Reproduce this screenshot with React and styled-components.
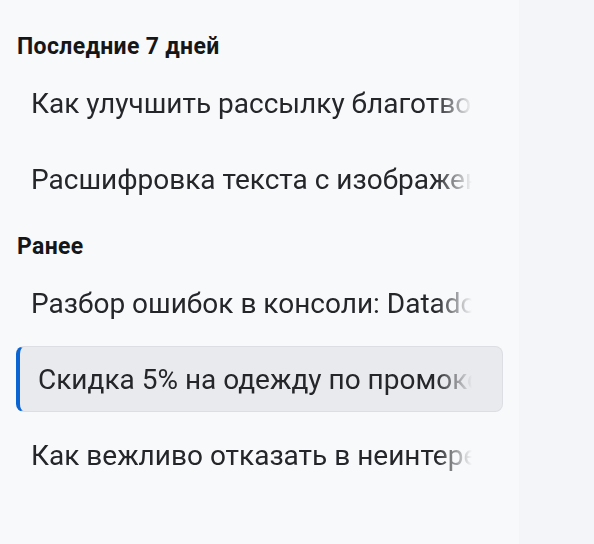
import React from 'react';
import styled, { createGlobalStyle } from 'styled-components';

const GlobalStyle = createGlobalStyle`
  html, body {
    margin: 0;
    padding: 0;
    height: 100%;
    background: #f4f5f8;
  }
  #root {
    height: 100%;
  }
`;

const sections = [
  {
    title: 'Последние 7 дней',
    items: [
      { id: 1, text: 'Как улучшить рассылку благотворительного фонда' },
      { id: 2, text: 'Расшифровка текста с изображения' },
    ],
  },
  {
    title: 'Ранее',
    items: [
      { id: 3, text: 'Разбор ошибок в консоли: Datadog' },
      { id: 4, text: 'Скидка 5% на одежду по промокоду', active: true },
      { id: 5, text: 'Как вежливо отказать в неинтересном предложении' },
    ],
  },
];

const Page = styled.div`
  display: flex;
  height: 544px;
  font-family: Roboto, "Noto Sans", sans-serif;
`;

const Sidebar = styled.nav`
  width: 519px;
  box-sizing: border-box;
  padding: 33px 16px 0 16px;
  background: #f8f9fb;
  display: flex;
  flex-direction: column;
`;

const Main = styled.main`
  flex: 1;
  background: #f4f5f8;
`;

const Section = styled.section`
  display: flex;
  flex-direction: column;
  & + & {
    margin-top: 21px;
  }
`;

const SectionTitle = styled.h3`
  margin: 0 0 9px 1px;
  font-size: 23px;
  letter-spacing: 0.35px;
  line-height: 28px;
  font-weight: 700;
  color: #151618;
`;

const List = styled.ul`
  list-style: none;
  margin: 0;
  padding: 0;
  display: flex;
  flex-direction: column;
  gap: 10px;
`;

const Item = styled.li`
  height: 66px;
  box-sizing: border-box;
  display: flex;
  align-items: center;
  border-radius: 8px;
  cursor: pointer;
  padding: 0 30px 0 ${({ $active }) => ($active ? '18px' : '14px')};
  background: ${({ $active }) => ($active ? '#e9eaee' : 'transparent')};
  border: 1px solid ${({ $active }) => ($active ? '#dcdee3' : 'transparent')};
  border-left: ${({ $active }) => ($active ? '4px solid #0a64d2' : '1px solid transparent')};
`;

const ItemText = styled.span`
  flex: 1;
  overflow: hidden;
  white-space: nowrap;
  font-size: 28px;
  color: #25262a;
  -webkit-mask-image: linear-gradient(to right, #000 calc(100% - 36px), transparent);
  mask-image: linear-gradient(to right, #000 calc(100% - 36px), transparent);
`;

export default function App() {
  return (
    <>
      <GlobalStyle />
      <Page>
        <Sidebar>
          {sections.map((s) => (
            <Section key={s.title}>
              <SectionTitle>{s.title}</SectionTitle>
              <List>
                {s.items.map((it) => (
                  <Item key={it.id} $active={it.active}>
                    <ItemText>{it.text}</ItemText>
                  </Item>
                ))}
              </List>
            </Section>
          ))}
        </Sidebar>
        <Main />
      </Page>
    </>
  );
}
